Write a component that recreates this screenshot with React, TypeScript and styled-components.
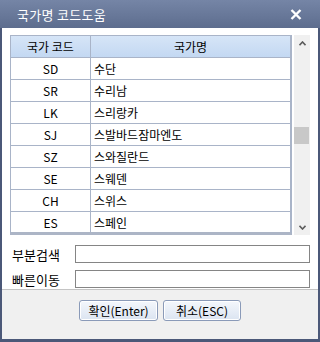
import React from 'react';
import styled, { createGlobalStyle } from 'styled-components';

const GlobalStyle = createGlobalStyle`
  html, body {
    margin: 0;
    padding: 0;
    background: #4b5878;
  }
  body {
    font-family: "Noto Sans CJK KR", "Noto Sans", sans-serif;
  }
`;

const FONT = '"Noto Sans CJK KR", "Noto Sans", sans-serif';

const countries = [
  { code: 'SD', name: '수단' },
  { code: 'SR', name: '수리남' },
  { code: 'LK', name: '스리랑카' },
  { code: 'SJ', name: '스발바드잠마엔도' },
  { code: 'SZ', name: '스와질란드' },
  { code: 'SE', name: '스웨덴' },
  { code: 'CH', name: '스위스' },
  { code: 'ES', name: '스페인' },
];

const Window = styled.div`
  width: 320px;
  height: 342px;
  display: flex;
  flex-direction: column;
  background: #4b5878;
  box-sizing: border-box;
`;

const TitleBar = styled.div`
  height: 28px;
  flex: none;
  display: flex;
  align-items: center;
  justify-content: space-between;
  padding: 0 18px 0 17px;
  background: linear-gradient(#7585a6, #5d6d8e);
  color: #fff;
`;

const Title = styled.span`
  font-family: ${FONT};
  font-size: 13px;
  letter-spacing: 0.3px;
`;

const Inner = styled.div`
  flex: 1;
  display: flex;
  flex-direction: column;
  margin: 0 2px 3px 2px;
  background: #fff;
`;

const Content = styled.div`
  padding: 7px 8px 0 8px;
  height: 262px;
  box-sizing: border-box;
  border-bottom: 1px solid #c4c4c4;
`;

const ListArea = styled.div`
  display: flex;
  gap: 2px;
  height: 200px;
`;

const Table = styled.div`
  width: 282px;
  display: flex;
  flex-direction: column;
  border: 1px solid #a9b4c8;
  border-bottom: 3px solid #acb5c6;
  border-right: 2px solid #a9b4c8;
  box-sizing: border-box;
  overflow: hidden;
`;

const Row = styled.div<{ $header?: boolean }>`
  display: grid;
  grid-template-columns: 79px 1fr;
  height: 22px;
  flex: none;
  box-sizing: border-box;
  border-bottom: 1px solid #a9b4c8;
  background: ${(p) => (p.$header ? 'linear-gradient(#d6e5f7, #c3d8f2)' : '#fff')};
  font-family: ${FONT};
  font-size: 12px;
  color: #000;
`;

const Cell = styled.div<{ $center?: boolean; $divider?: boolean }>`
  display: flex;
  align-items: center;
  justify-content: ${(p) => (p.$center ? 'center' : 'flex-start')};
  padding-left: ${(p) => (p.$center ? '0' : '3px')};
  border-left: ${(p) => (p.$divider ? '1px solid #a9b4c8' : 'none')};
  white-space: nowrap;
`;

const ScrollBar = styled.div`
  width: 16px;
  position: relative;
  background: #f0f0f0;
  display: flex;
  flex-direction: column;
  align-items: center;
  justify-content: space-between;
  padding: 6px 0 5px;
  box-sizing: border-box;
`;

const Thumb = styled.div`
  position: absolute;
  left: 0;
  top: 92px;
  width: 15px;
  height: 17px;
  background: #c8c8c8;
`;

const Form = styled.div`
  display: flex;
  flex-direction: column;
  gap: 7px;
  padding-top: 10px;
`;

const FormRow = styled.div`
  display: flex;
  align-items: center;
  height: 18px;
`;

const Label = styled.span`
  width: 63px;
  padding-left: 2px;
  font-family: ${FONT};
  font-size: 13px;
  color: #000;
`;

const Input = styled.div`
  width: 235px;
  height: 18px;
  box-sizing: border-box;
  border: 1px solid #858585;
  background: #fff;
`;

const Footer = styled.div`
  flex: 1;
  background: #f0f0f0;
  display: flex;
  justify-content: center;
  align-items: flex-start;
  gap: 5px;
  padding-top: 10px;
`;

const Button = styled.div<{ $w: number }>`
  width: ${(p) => p.$w}px;
  height: 21px;
  box-sizing: border-box;
  border: 1px solid #8a9ab8;
  border-radius: 3px;
  background: linear-gradient(#f4f7fc, #dbe4f1);
  box-shadow: inset 0 0 0 1px #ffffff;
  display: flex;
  align-items: center;
  justify-content: center;
  font-family: ${FONT};
  font-size: 12px;
  color: #000;
`;

const Chevron = ({ up }: { up?: boolean }) => (
  <svg width="7" height="5" viewBox="0 0 7 5">
    <path
      d={up ? 'M0.5 4.2 L3.5 1 L6.5 4.2' : 'M0.5 0.8 L3.5 4 L6.5 0.8'}
      fill="none"
      stroke="#5c5c5c"
      strokeWidth="1.6"
    />
  </svg>
);

const CloseIcon = () => (
  <svg width="12" height="11" viewBox="0 0 12 11">
    <path d="M1.5 1 L10.5 10 M10.5 1 L1.5 10" stroke="#fff" strokeWidth="2.4" />
  </svg>
);

export default function App() {
  return (
    <>
      <GlobalStyle />
      <Window>
        <TitleBar>
          <Title>국가명 코드도움</Title>
          <CloseIcon />
        </TitleBar>
        <Inner>
          <Content>
            <ListArea>
              <Table>
                <Row $header>
                  <Cell $center>국가 코드</Cell>
                  <Cell $center $divider>국가명</Cell>
                </Row>
                {countries.map((c) => (
                  <Row key={c.code}>
                    <Cell $center>{c.code}</Cell>
                    <Cell $divider>{c.name}</Cell>
                  </Row>
                ))}
              </Table>
              <ScrollBar>
                <Chevron up />
                <Thumb />
                <Chevron />
              </ScrollBar>
            </ListArea>
            <Form>
              <FormRow>
                <Label>부분검색</Label>
                <Input />
              </FormRow>
              <FormRow>
                <Label>빠른이동</Label>
                <Input />
              </FormRow>
            </Form>
          </Content>
          <Footer>
            <Button $w={79}>확인(Enter)</Button>
            <Button $w={78}>취소(ESC)</Button>
          </Footer>
        </Inner>
      </Window>
    </>
  );
}
